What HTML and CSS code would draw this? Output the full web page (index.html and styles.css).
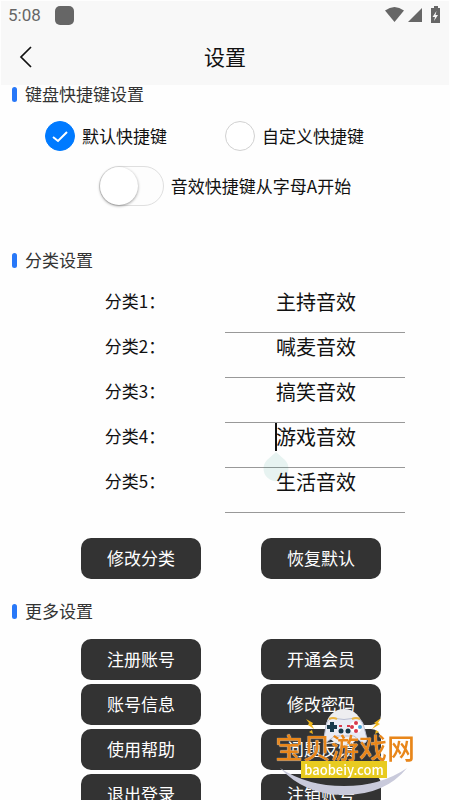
FILE: index.html
```html
<!DOCTYPE html>
<html lang="zh-CN">
<head>
    <meta charset="UTF-8">
    <meta name="viewport" content="width=device-width, initial-scale=1.0">
    <title>设置</title>
    <link rel="stylesheet" href="styles.css">
</head>
<body>
    <header class="header">
        <div class="status-bar">
            <span class="time">5:08</span>
            <span class="status-app"></span>
            <svg class="status-icons" width="56" height="18" viewBox="0 0 56 18" fill="#666">
                <path d="M0 4.500Q9.500 -2.500 19 4.500L9.500 16Z"/>
                <path d="M23 16L37 2V16Z"/>
                <path d="M49 0h4v2h2v15h-9V2h3z"/>
                <path d="M51.500 5l-4 6h2.500l-1 4 4-6h-2.500z" fill="#f8f8f8"/>
            </svg>
        </div>
        <div class="nav-bar">
            <button class="back" aria-label="返回">
                <svg width="14" height="22" viewBox="0 0 14 22" fill="none" stroke="#111" stroke-width="1.700"><path d="M12 1L2 11L12 21"/></svg>
            </button>
            <h1>设置</h1>
        </div>
    </header>

    <main>
        <section class="section">
            <h2>键盘快捷键设置</h2>
            <div class="radio-row">
                <label><input type="radio" name="hotkey" checked>默认快捷键</label>
                <label><input type="radio" name="hotkey">自定义快捷键</label>
            </div>
            <label class="switch-row"><input type="checkbox" class="switch">音效快捷键从字母A开始</label>
        </section>

        <section class="section">
            <h2>分类设置</h2>
            <div class="fields">
                <div class="field">
                    <label for="cat1">分类1：</label>
                    <div class="field-input"><input type="text" id="cat1" value="主持音效"></div>
                </div>
                <div class="field">
                    <label for="cat2">分类2：</label>
                    <div class="field-input"><input type="text" id="cat2" value="喊麦音效"></div>
                </div>
                <div class="field">
                    <label for="cat3">分类3：</label>
                    <div class="field-input"><input type="text" id="cat3" value="搞笑音效"></div>
                </div>
                <div class="field">
                    <label for="cat4">分类4：</label>
                    <div class="field-input">
                        <input type="text" id="cat4" value="游戏音效">
                        <span class="caret"></span>
                        <svg class="caret-handle" width="26" height="30" viewBox="0 0 26 30"><path d="M13 0L22 8A12.500 12.500 0 1 1 4 8Z" fill="#008870" fill-opacity=".09"/></svg>
                    </div>
                </div>
                <div class="field">
                    <label for="cat5">分类5：</label>
                    <div class="field-input"><input type="text" id="cat5" value="生活音效"></div>
                </div>
            </div>
            <div class="buttons">
                <button>修改分类</button>
                <button>恢复默认</button>
            </div>
        </section>

        <section class="section">
            <h2>更多设置</h2>
            <div class="buttons more">
                <button>注册账号</button>
                <button>开通会员</button>
                <button>账号信息</button>
                <button>修改密码</button>
                <button>使用帮助</button>
                <button>问题反馈</button>
                <button>退出登录</button>
                <button>注销账号</button>
            </div>
        </section>
    </main>

    <div class="watermark">
        <svg width="140" height="96" viewBox="0 0 140 96">
            <!-- smile -->
            <path d="M5 64Q30 91 69 91Q110 91 132 64Q106 82 69 82Q32 82 5 64Z" fill="#c9cadb"/>
            <!-- gamepad -->
            <circle cx="69" cy="23" r="18" fill="#eeeef0"/>
            <path d="M57 14Q69 17 81 14Q87 14 89 23L92 35Q91 42 85 37L79 32H60L53 37Q47 42 50 28Q51 15 57 14Z" fill="#e9ebf5" stroke="#b9bed2"/>
            <path d="M54 15Q58 13 62 15M77 15Q81 13 85 15" fill="none" stroke="#eab440" stroke-width="2"/>
            <path d="M55 18h4v3h3v4h-3v3h-4v-3h-3v-4h3z" fill="#17394a"/>
            <circle cx="81" cy="23" r="6" fill="#fff"/>
            <circle cx="81" cy="19" r="2" fill="#d83a4c"/>
            <circle cx="77" cy="23" r="2" fill="#d83a4c"/>
            <circle cx="85" cy="23" r="2" fill="#4aa3d8"/>
            <circle cx="81" cy="27" r="2" fill="#d83a4c"/>
            <circle cx="66" cy="27" r="2.500" fill="#17394a"/>
            <circle cx="73" cy="27" r="2.500" fill="#17394a"/>
            <path d="M64 22h3M72 22h3" stroke="#d83a4c" stroke-width="2"/>
            <!-- sparks -->
            <path d="M31 15l7 4-1 2 2 4-6-4 1-2zM30 27l4 1 4 2-1-4-3 2z" fill="#f0b61c"/>
            <path d="M106 14l-7 5 2 1-4 5 8-5-2-1zM108 26l-8 4 1-4 3 2z" fill="#f0b61c"/>
        </svg>
        <span class="watermark-name">宝贝游戏网</span>
        <span class="watermark-url">baobeiy.com</span>
    </div>
</body>
</html>
```

FILE: styles.css
```css
* {
    box-sizing: border-box;
}

body {
    margin: 0;
    height: 100vh;
    overflow: hidden;
    background: #fefefe;
    color: #111;
    font-family: Roboto, "Noto Sans CJK SC", sans-serif;
    font-size: 17px;
}

h1, h2 {
    margin: 0;
    font-weight: normal;
}

button, input {
    font-family: inherit;
}

/* Header */
.header {
    height: 85px;
    background: #f8f8f8;
    border: 1px solid #fefefe;
    border-bottom: none;
}
.status-bar {
    display: flex;
    align-items: center;
    height: 28px;
    padding: 0 8px 0 7px;
    color: #666;
}
.status-app {
    width: 19px;
    height: 19px;
    margin-left: 14px;
    border-radius: 5px;
    background: #666;
}
.status-icons {
    margin-left: auto;
}
.nav-bar {
    position: relative;
    display: flex;
    align-items: center;
    justify-content: center;
    height: 56px;
}
.nav-bar h1 {
    padding-bottom: 3px;
    font-size: 21px;
}
.back {
    position: absolute;
    left: 12px;
    display: flex;
    padding: 6px;
    border: none;
    background: none;
}

/* Sections */
.section {
    margin-bottom: 45px;
    font-family: "Noto Sans CJK SC", sans-serif;
}
.section h2 {
    display: flex;
    align-items: center;
    gap: 8px;
    height: 18px;
    margin-bottom: 18px;
    padding-left: 12px;
    font-size: 17px;
    line-height: 16px;
    color: #333;
}
.section h2::before {
    content: "";
    width: 5px;
    height: 15px;
    border-radius: 3px;
    background: #2878f8;
}
.section:nth-child(2) {
    margin-bottom: 23px;
}

/* Shortcut options */
.radio-row {
    display: grid;
    grid-template-columns: 1fr 1fr;
    padding: 0 45px;
    margin-bottom: 15px;
}
.radio-row label, .switch-row {
    display: flex;
    align-items: center;
    gap: 7px;
    line-height: 26px;
    white-space: nowrap;
}
.radio-row label {
    height: 30px;
}
.radio-row input {
    appearance: none;
    flex: none;
    width: 30px;
    height: 30px;
    margin: 0;
    border: 1px solid #d1d1d1;
    border-radius: 50%;
    background: #fff;
}
.radio-row input:checked {
    border-color: #007aff;
    background: #007aff url("data:image/svg+xml,%3Csvg xmlns='http://www.w3.org/2000/svg' viewBox='0 0 28 28' fill='none' stroke='white' stroke-width='2'%3E%3Cpath d='M7 15l5 4 9-9'/%3E%3C/svg%3E") center / 28px no-repeat;
}
.switch-row {
    justify-content: center;
}
.switch {
    appearance: none;
    width: 65px;
    height: 40px;
    margin: 0;
    border: 1px solid #dfdfdf;
    border-radius: 20px;
    background: #fdfdfd;
}
.switch::before {
    content: "";
    display: block;
    width: 38px;
    height: 38px;
    border-radius: 50%;
    background: #fff;
    box-shadow: 0 1px 3px rgba(0, 0, 0, 0.4);
}
.switch:checked {
    background: #007aff;
}
.switch:checked::before {
    margin-left: auto;
}

/* Category names */
.fields {
    padding: 0 45px;
}
.field {
    display: grid;
    grid-template-columns: 1fr 1fr;
    height: 45px;
}
.field label {
    line-height: 28px;
    text-align: center;
}
.field-input {
    position: relative;
    display: flex;
}
.field-input input {
    width: 100%;
    padding: 0 0 16px 2px;
    border: none;
    border-bottom: 1px solid #999;
    outline: none;
    background: none;
    color: #111;
    font-size: 20px;
    text-align: center;
}
.caret {
    position: absolute;
    top: 1px;
    left: calc(50% - 40px);
    width: 2px;
    height: 28px;
    background: #111;
}
.caret-handle {
    position: absolute;
    top: 30px;
    left: calc(50% - 52px);
}

/* Buttons */
.buttons {
    display: grid;
    grid-template-columns: 1fr 1fr;
    justify-items: center;
    gap: 4px 0;
    margin-top: 26px;
    padding: 0 39px 0 51px;
}
.buttons.more {
    margin-top: 19px;
}
.buttons button {
    width: 120px;
    height: 41px;
    padding: 0 0 2px;
    border: none;
    border-radius: 10px;
    background: #333;
    color: #fff;
    font-size: 17px;
}

/* Site mark */
.watermark {
    position: fixed;
    right: 35px;
    bottom: 0;
    width: 140px;
    height: 96px;
}
.watermark svg {
    display: block;
}
.watermark-name {
    position: absolute;
    top: 27px;
    left: 0;
    color: #e8861a;
    font-family: "Noto Sans CJK SC", sans-serif;
    font-size: 28px;
    font-weight: 500;
    line-height: 32px;
    white-space: nowrap;
    text-shadow: 0 0 1px #fff;
}
.watermark-url {
    position: absolute;
    top: 57px;
    left: 26px;
    width: 86px;
    background: #e8cb20;
    color: #fff;
    font-family: "Noto Sans CJK SC", sans-serif;
    font-size: 13px;
    font-weight: 500;
    line-height: 17px;
    text-align: center;
}
```
